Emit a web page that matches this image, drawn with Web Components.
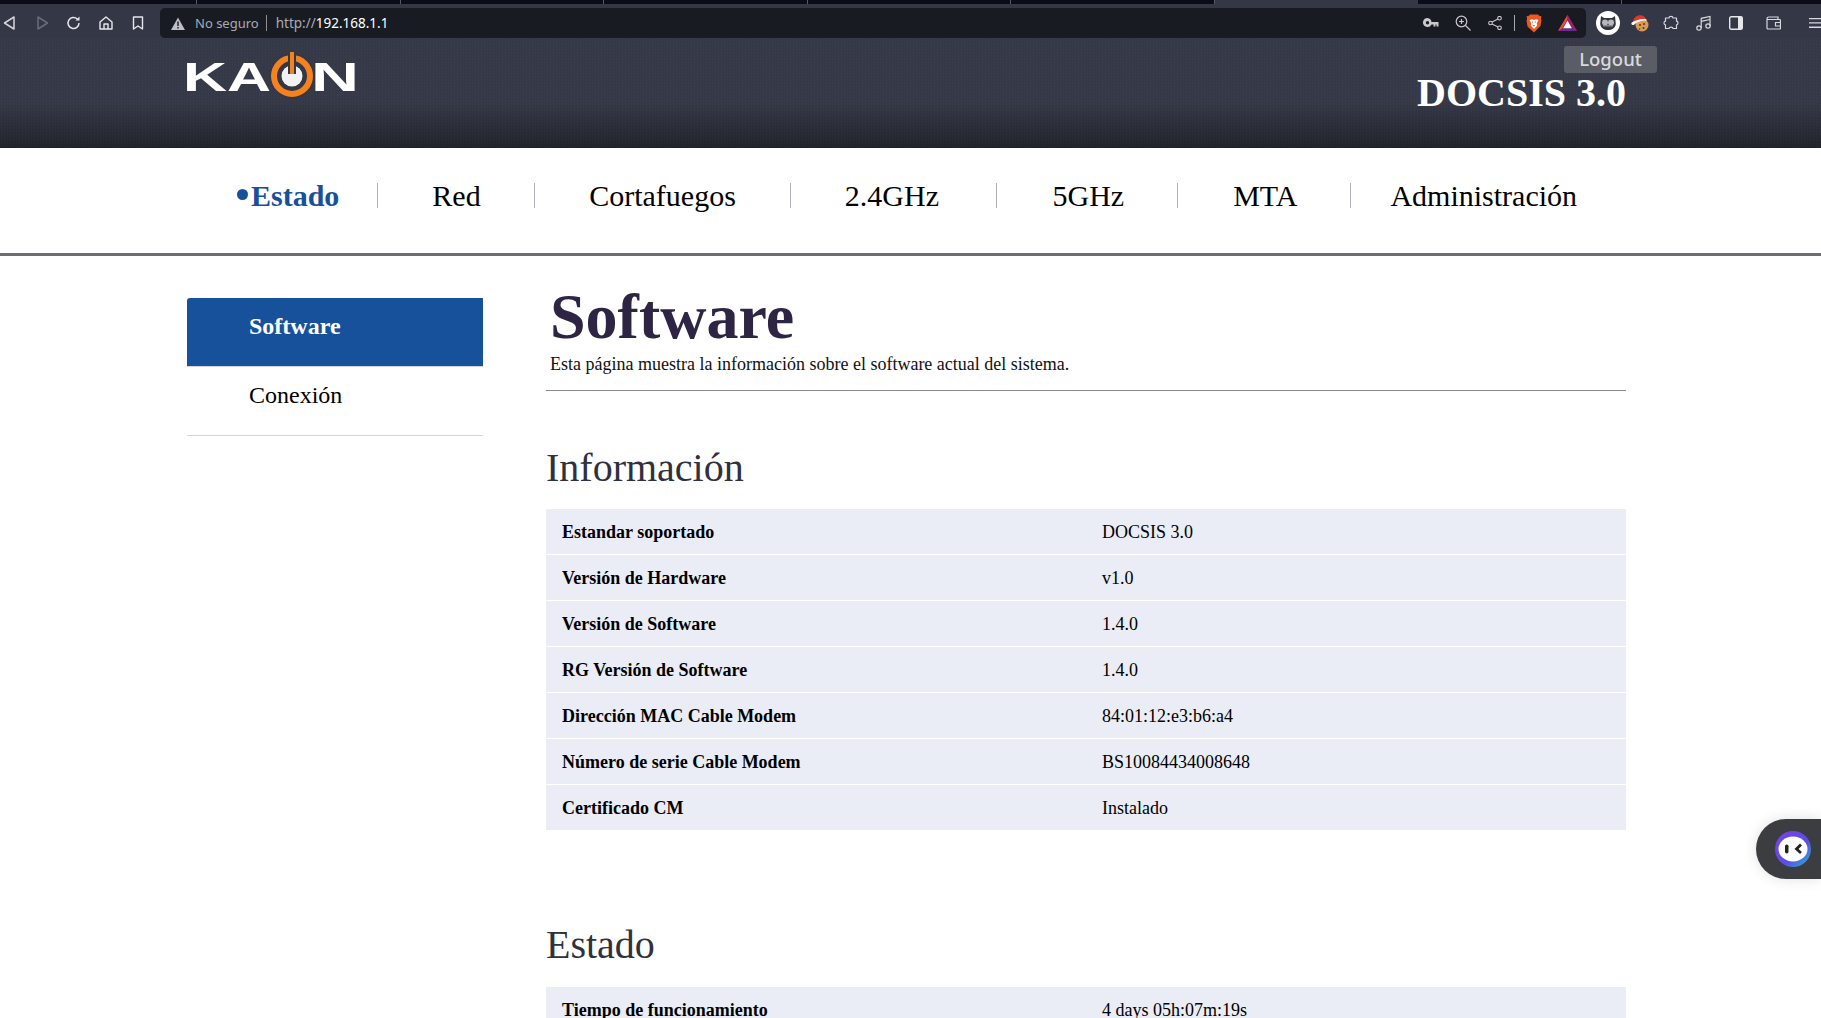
<!DOCTYPE html>
<html lang="es">
<head>
<meta charset="utf-8">
<title>Software</title>
<style>
    html, body { margin: 0; height: 1018px; overflow: hidden; background: #fff; }
    body { font-family: "Liberation Serif", "Times New Roman", serif; color: #000; }
</style>
</head>
<body>
<browser-bar></browser-bar>
<kaon-header></kaon-header>
<main-nav>
    <nav-item active first>Estado</nav-item>
    <nav-item style="padding: 0 53px 0 54px">Red</nav-item>
    <nav-item style="padding: 0 54px 0 54.5px">Cortafuegos</nav-item>
    <nav-item style="padding: 0 57.5px 0 54px">2.4GHz</nav-item>
    <nav-item style="padding: 0 53px 0 55px">5GHz</nav-item>
    <nav-item style="padding: 0 53px 0 55px">MTA</nav-item>
    <nav-item last>Administración</nav-item>
</main-nav>
<page-layout>
    <side-menu slot="side">
        <side-item active>Software</side-item>
        <side-item>Conexión</side-item>
    </side-menu>
    <page-title title="Software" description="Esta página muestra la información sobre el software actual del sistema."></page-title>
    <info-section heading="Información">
        <info-row label="Estandar soportado" value="DOCSIS 3.0"></info-row>
        <info-row label="Versión de Hardware" value="v1.0"></info-row>
        <info-row label="Versión de Software" value="1.4.0"></info-row>
        <info-row label="RG Versión de Software" value="1.4.0"></info-row>
        <info-row label="Dirección MAC Cable Modem" value="84:01:12:e3:b6:a4"></info-row>
        <info-row label="Número de serie Cable Modem" value="BS10084434008648"></info-row>
        <info-row label="Certificado CM" value="Instalado"></info-row>
    </info-section>
    <info-section heading="Estado" second>
        <info-row label="Tiempo de funcionamiento" value="4 days 05h:07m:19s"></info-row>
    </info-section>
</page-layout>
<chat-bubble></chat-bubble>

<script>
class BrowserBar extends HTMLElement {
    constructor() {
        super();
        const shadow = this.attachShadow({ mode: 'open' });
        shadow.innerHTML = `
            <style>
                :host { display: block; height: 38px; background: #343745; font-family: "Noto Sans", sans-serif; }
                .tabs { display: flex; height: 4px; background: #0c0c18; }
                .tab { width: 203.5px; box-sizing: border-box; border-right: 1px solid #555866; }
                .tab.first { width: 197px; }
                .tab.on { background: #343745; border: 0; }
                .bar { height: 30px; margin-top: 4px; display: flex; align-items: center; }
                .nav { display: flex; width: 160px; height: 30px; align-items: center; flex: none; }
                .nav svg { flex: none; margin-left: 11px; }
                .nav svg:first-child { margin-left: 1px; }
                .url { flex: none; box-sizing: border-box; width: 1426px; height: 30px; background: #181b22; border-radius: 5px; display: flex; align-items: center; padding-left: 11px; font-size: 13px; color: #a9abb3; }
                .sep { width: 1px; height: 16px; background: #8d8f96; margin: 0 9px 0 7px; }
                .addr { font-size: 13.5px; }
                .host { color: #fff; }
                .warn { margin-right: 10px; }
                .tools { margin-left: auto; display: flex; align-items: center; }
                .tools > * { flex: none; }
                .after { display: flex; align-items: center; flex: none; }
            </style>
            <div class="tabs">
                <div class="tab first"></div><div class="tab"></div><div class="tab"></div><div class="tab"></div><div class="tab"></div><div class="tab"></div><div class="tab on"></div><div class="tab"></div>
            </div>
            <div class="bar">
                <div class="nav">
                    <svg width="18" height="18" viewBox="0 0 18 18" fill="none" stroke="#d4d5da" stroke-width="1.5" stroke-linejoin="round"><path d="M13 3v12L3.500 9z"/></svg>
                    <svg width="18" height="18" viewBox="0 0 18 18" fill="none" stroke="#6a6c78" stroke-width="1.5" stroke-linejoin="round" style="margin-left:14px"><path d="M5 3v12l9.500-6z"/></svg>
                    <svg width="18" height="18" viewBox="0 0 18 18" fill="none" stroke="#e6e7ea" stroke-width="1.5" style="margin-left:14px"><path d="M14 9a5.500 5.500 0 1 1-1.700-4"/><path d="M14.500 2.500v4h-4" fill="#e6e7ea" stroke="none"/></svg>
                    <svg width="18" height="18" viewBox="0 0 18 18" fill="none" stroke="#e6e7ea" stroke-width="1.4" stroke-linejoin="round" style="margin-left:14px"><path d="M3 8l6-5 6 5v7H3z"/><path d="M7 15v-5h4v5"/></svg>
                    <svg width="18" height="18" viewBox="0 0 18 18" fill="none" stroke="#e6e7ea" stroke-width="1.4" stroke-linejoin="round" style="margin-left:14px"><path d="M4.500 3h9v12L9 12l-4.500 3z"/></svg>
                </div>
                <div class="url">
                    <svg class="warn" width="14" height="13" viewBox="0 0 14 13"><path d="M7 .5L14 13H0z" fill="#bfc0c5"/><path d="M6.300 4.500h1.400v4.500H6.300zM6.300 10h1.400v1.400H6.300z" fill="#181b22"/></svg>
                    <span>No seguro</span>
                    <span class="sep"></span>
                    <span class="addr">http://<span class="host">192.168.1.1</span></span>
                    <div class="tools">
                        <svg width="16" height="12" viewBox="0 0 16 12" fill="#c8c9cd"><path d="M4.500 1a4.500 4.500 0 1 0 4 6.500h2v2h2v-2h1v2h2V5H8.500a4.500 4.500 0 0 0-4-4zm0 3a1.700 1.700 0 1 1 0 3.400 1.700 1.700 0 0 1 0-3.400z"/></svg>
                        <svg width="16" height="16" viewBox="0 0 16 16" fill="none" stroke="#c8c9cd" stroke-width="1.2" style="margin-left:16px"><circle cx="6.500" cy="6.500" r="5.300"/><path d="M10.500 10.500l5 5M6.500 4v5M4 6.500h5"/></svg>
                        <svg width="14" height="14" viewBox="0 0 14 14" fill="none" stroke="#c8c9cd" stroke-width="1.1" style="margin-left:17px"><circle cx="2.500" cy="7" r="1.800"/><circle cx="11.500" cy="2.200" r="1.800"/><circle cx="11.500" cy="11.800" r="1.800"/><path d="M4 6l6-3M4 8l6 3"/></svg>
                        <span style="width:1px;height:16px;background:#a5a7ad;margin-left:12px"></span>
                        <svg width="16" height="19" viewBox="0 0 16 19" style="margin-left:11px"><path d="M4 .5h8l1.500 1.500 2 .3-.6 2.200.6 1.500-1 6L8 18.500 1.500 12.500l-1-6L1.100 5 .5 2.300l2-.3z" fill="#f1561f"/><path d="M3.500 6l2.500-.8 2 .8 2-.8 2.500.8-1.800 3.500.6 2L8 15l-3.300-3.500.6-2z" fill="#fff"/><path d="M6 7.500h1.200v1H6zM8.800 7.500H10v1H8.800zM6.800 11h2.400L8 12.800z" fill="#f1561f"/></svg>
                        <svg width="19" height="17" viewBox="0 0 19 17" style="margin:0 9px 0 16px"><path d="M9.500 0L0 16h19z" fill="#662d91"/><path d="M9.500 0L0 16l4.500-2.800L9.500 4z" fill="#ff4724"/><path d="M9.500 0v4l5 9.200L19 16z" fill="#9e1f63"/><path d="M9.500 5.500l-4.300 7.700h8.600z" fill="#fff"/></svg>
                    </div>
                </div>
                <div class="after">
                    <svg width="24" height="24" viewBox="0 0 24 24" style="margin-left:10px"><circle cx="12" cy="12" r="12" fill="#fff"/><path d="M5 5l3 2h8l3-2 .8 8c-.5 4-4 6-7.800 6S4.700 17 4.200 13z" fill="#34343c"/><circle cx="9" cy="11.500" r="3" fill="#b8b8bd"/><circle cx="15" cy="11.500" r="3" fill="#b8b8bd"/><path d="M7 14h10v1.500H7z" fill="#8c8c92"/></svg>
                    <svg width="18" height="18" viewBox="0 0 18 18" style="margin-left:11px"><circle cx="11" cy="11" r="6.500" fill="#d99a55"/><circle cx="9" cy="11" r="1" fill="#5b3418"/><circle cx="13" cy="10" r="1" fill="#5b3418"/><circle cx="12.500" cy="14" r="1" fill="#5b3418"/><circle cx="8.500" cy="15" r=".8" fill="#5b3418"/><path d="M2 8C2.500 3 7 .5 11 1.500c2 .5 3.500 2 4 4-3.500-.6-8 .2-10.500 3z" fill="#e2352c"/><path d="M1.500 8c3-1.800 8-3.500 13.500-3l1 1.600C11 6 6 8 3 10.500z" fill="#fff"/><circle cx="2" cy="9.500" r="1.600" fill="#fff"/></svg>
                    <svg width="16" height="16" viewBox="0 0 16 16" fill="none" stroke="#d8d9dd" stroke-width="1.2" stroke-linejoin="round" style="margin-left:14px"><path d="M6 3C6 .8 10 .8 10 3h3.500v3.200c2 0 2 3.600 0 3.600v3.700H10c0-1.800-4-1.800-4 0H2.500V9.800c-2 0-2-3.600 0-3.600V3z"/></svg>
                    <svg width="15" height="16" viewBox="0 0 15 16" fill="none" stroke="#d8d9dd" stroke-width="1.2" style="margin-left:17px"><circle cx="3" cy="13" r="2.200"/><circle cx="12" cy="11" r="2.200"/><path d="M5.200 13V3.300L14 1.500V11M5.200 6.300L14 4.500"/></svg>
                    <svg width="14" height="14" viewBox="0 0 14 14" style="margin-left:18px"><rect x=".7" y=".7" width="12.600" height="12.600" rx="1.500" fill="none" stroke="#e6e7ea" stroke-width="1.400"/><rect x="9" y="1" width="4" height="12" fill="#e6e7ea"/></svg>
                    <svg width="15" height="14" viewBox="0 0 15 14" fill="none" stroke="#d8d9dd" stroke-width="1.200" style="margin-left:23px"><path d="M1 3.500h12.500a1 1 0 0 1 1 1V12a1 1 0 0 1-1 1H2a1 1 0 0 1-1-1V3C1 1.500 2 1 3 1h9v2.500"/><path d="M14.500 6.500H9.500v3.500h5"/></svg>
                    <svg width="14" height="12" viewBox="0 0 14 12" fill="#d8d9dd" style="margin-left:28px"><path d="M0 1h14v1.300H0zM0 5.300h14v1.300H0zM0 9.600h14v1.300H0z"/></svg>
                </div>
            </div>
        `;
    }
}
window.customElements.define('browser-bar', BrowserBar);

class KaonHeader extends HTMLElement {
    constructor() {
        super();
        const shadow = this.attachShadow({ mode: 'open' });
        shadow.innerHTML = `
            <style>
                :host { display: block; position: relative; height: 110px; box-sizing: border-box; padding: 14px 195px 0 186px;
                    background: repeating-conic-gradient(rgba(255,255,255,.018) 0 25%, transparent 0 50%) 0 0/3px 3px, linear-gradient(#343745 0, #343745 58%, #20222a 100%);
                    display: flex; justify-content: space-between; }
                svg { display: block; flex: none; overflow: visible; }
                text { font-family: "Liberation Sans", Arial, sans-serif; font-weight: 700; fill: #fff; }
                h2 { margin: 18px 0 0; font-size: 40px; line-height: 46px; font-weight: 700; color: #fff; white-space: nowrap; }
                .logout { position: absolute; left: 1564px; top: 8px; width: 93px; height: 27px; background: #5a5d65; border-radius: 3px; color: #d9dadc;
                    font: 500 18.5px/25px "Noto Sans", sans-serif; text-align: center; }
            </style>
            <svg width="170" height="46" viewBox="0 0 170 46">
                <text x="-3" y="39" font-size="41" textLength="88" lengthAdjust="spacingAndGlyphs">KA</text>
                <text x="125" y="39" font-size="41" textLength="48" lengthAdjust="spacingAndGlyphs">N</text>
                <circle cx="106" cy="24" r="23" fill="#343745"/>
                <circle cx="106" cy="24" r="18" fill="none" stroke="#f5821f" stroke-width="6"/>
                <circle cx="106" cy="24" r="10.500" fill="#f2f2f2"/>
                <rect x="102" y="0" width="8" height="22" fill="#343745"/>
                <rect x="104" y="0" width="4" height="22" fill="#f5821f"/>
            </svg>
            <h2>DOCSIS 3.0</h2>
            <div class="logout">Logout</div>
        `;
    }
}
window.customElements.define('kaon-header', KaonHeader);

class MainNav extends HTMLElement {
    constructor() {
        super();
        const shadow = this.attachShadow({ mode: 'open' });
        shadow.innerHTML = `
            <style>
                :host { display: flex; height: 105px; box-sizing: content-box; padding-left: 236px; align-items: flex-start; border-bottom: 3px solid #6b6e78; background: #fff; }
                .row { display: flex; margin-top: 35px; }
            </style>
            <div class="row"><slot></slot></div>
        `;
    }
}
window.customElements.define('main-nav', MainNav);

class NavItem extends HTMLElement {
    constructor() {
        super();
        const shadow = this.attachShadow({ mode: 'open' });
        shadow.innerHTML = `
            <style>
                :host { display: block; box-sizing: border-box; height: 25px; padding: 0 54px 0 55px; border-right: 1px solid #aeb0b5; font-size: 30px; line-height: 25px; color: #000; white-space: nowrap; }
                :host([first]) { padding-left: 15px; padding-right: 38px; position: relative; }
                :host([last]) { padding-left: 39px; border-right: 0; }
                :host([active]) { color: #17519c; font-weight: 700; }
                .dot { display: none; position: absolute; left: 1px; top: 6px; width: 11px; height: 11px; border-radius: 50%; background: #17519c; }
                :host([active]) .dot { display: block; }
            </style>
            <span class="dot"></span><slot></slot>
        `;
    }
}
window.customElements.define('nav-item', NavItem);

class PageLayout extends HTMLElement {
    constructor() {
        super();
        const shadow = this.attachShadow({ mode: 'open' });
        shadow.innerHTML = `
            <style>
                :host { display: grid; grid-template-columns: 296px 1080px; column-gap: 63px; padding: 42px 0 0 187px; }
            </style>
            <div><slot name="side"></slot></div>
            <div><slot></slot></div>
        `;
    }
}
window.customElements.define('page-layout', PageLayout);

class SideMenu extends HTMLElement {
    constructor() {
        super();
        const shadow = this.attachShadow({ mode: 'open' });
        shadow.innerHTML = `<style>:host { display: block; }</style><slot></slot>`;
    }
}
window.customElements.define('side-menu', SideMenu);

class SideItem extends HTMLElement {
    constructor() {
        super();
        const shadow = this.attachShadow({ mode: 'open' });
        shadow.innerHTML = `
            <style>
                :host { display: block; box-sizing: border-box; height: 69px; padding: 14px 0 0 62px; border-bottom: 1px solid #d4d5d8; font-size: 24px; line-height: 28px; color: #000; }
                :host([active]) { background: #17519c; color: #fff; font-weight: 700; border-top-left-radius: 3px; }
            </style>
            <slot></slot>
        `;
    }
}
window.customElements.define('side-item', SideItem);

class PageTitle extends HTMLElement {
    constructor() {
        super();
        const shadow = this.attachShadow({ mode: 'open' });
        shadow.innerHTML = `
            <style>
                :host { display: block; height: 92px; box-sizing: content-box; padding-left: 4px; border-bottom: 1px solid #8a8b8f; }
                h1 { margin: 0; font-size: 64px; line-height: 38px; font-weight: 700; color: #2e2545; }
                p { margin: 16px 0 0; font-size: 18px; line-height: 24px; color: #111; }
            </style>
            <h1></h1>
            <p></p>
        `;
        this.render();
    }
    render() {
        const shadow = this.shadowRoot;
        shadow.querySelector('h1').textContent = this.getAttribute('title');
        shadow.querySelector('p').textContent = this.getAttribute('description');
    }
}
window.customElements.define('page-title', PageTitle);

class InfoSection extends HTMLElement {
    constructor() {
        super();
        const shadow = this.attachShadow({ mode: 'open' });
        shadow.innerHTML = `
            <style>
                :host { display: block; padding-top: 52px; }
                :host([second]) { padding-top: 89px; }
                h2 { margin: 0 0 16px; font-size: 40px; line-height: 50px; font-weight: 400; color: #2f3040; }
                :host([second]) h2 { margin-bottom: 17px; }
            </style>
            <h2></h2>
            <slot></slot>
        `;
        shadow.querySelector('h2').textContent = this.getAttribute('heading');
    }
}
window.customElements.define('info-section', InfoSection);

class InfoRow extends HTMLElement {
    constructor() {
        super();
        const shadow = this.attachShadow({ mode: 'open' });
        shadow.innerHTML = `
            <style>
                :host { display: grid; grid-template-columns: 556px 1fr; box-sizing: border-box; height: 46px; background: #eaedf6; border-bottom: 1px solid #fff; font-size: 18px; line-height: 46px; color: #000; }
                .label { font-weight: 700; padding-left: 16px; }
            </style>
            <div class="label"></div>
            <div class="value"></div>
        `;
        shadow.querySelector('.label').textContent = this.getAttribute('label');
        shadow.querySelector('.value').textContent = this.getAttribute('value');
    }
}
window.customElements.define('info-row', InfoRow);

class ChatBubble extends HTMLElement {
    constructor() {
        super();
        const shadow = this.attachShadow({ mode: 'open' });
        shadow.innerHTML = `
            <style>
                :host { position: fixed; right: 0; top: 819px; width: 65px; height: 60px; background: #3c3d40; border-radius: 30px 0 0 30px; box-shadow: 0 0 14px rgba(0,0,0,.12); display: block; }
                svg { position: absolute; left: 19px; top: 12px; }
            </style>
            <svg width="36" height="36" viewBox="0 0 36 36">
                <defs><linearGradient id="g" x1="0" y1="0" x2="1" y2="1"><stop offset="0" stop-color="#7b3fe4"/><stop offset=".6" stop-color="#5a4ee8"/><stop offset="1" stop-color="#22b8cf"/></linearGradient></defs>
                <circle cx="18" cy="18" r="18" fill="url(#g)"/>
                <ellipse cx="18" cy="18" rx="14.500" ry="12.500" fill="#fff"/>
                <rect x="10" y="13.500" width="3.500" height="9" rx="1.700" fill="#222"/>
                <path d="M26 13.500l-4.500 4.500 4.500 4" fill="none" stroke="#222" stroke-width="2.800"/>
            </svg>
        `;
    }
}
window.customElements.define('chat-bubble', ChatBubble);
</script>
</body>
</html>
